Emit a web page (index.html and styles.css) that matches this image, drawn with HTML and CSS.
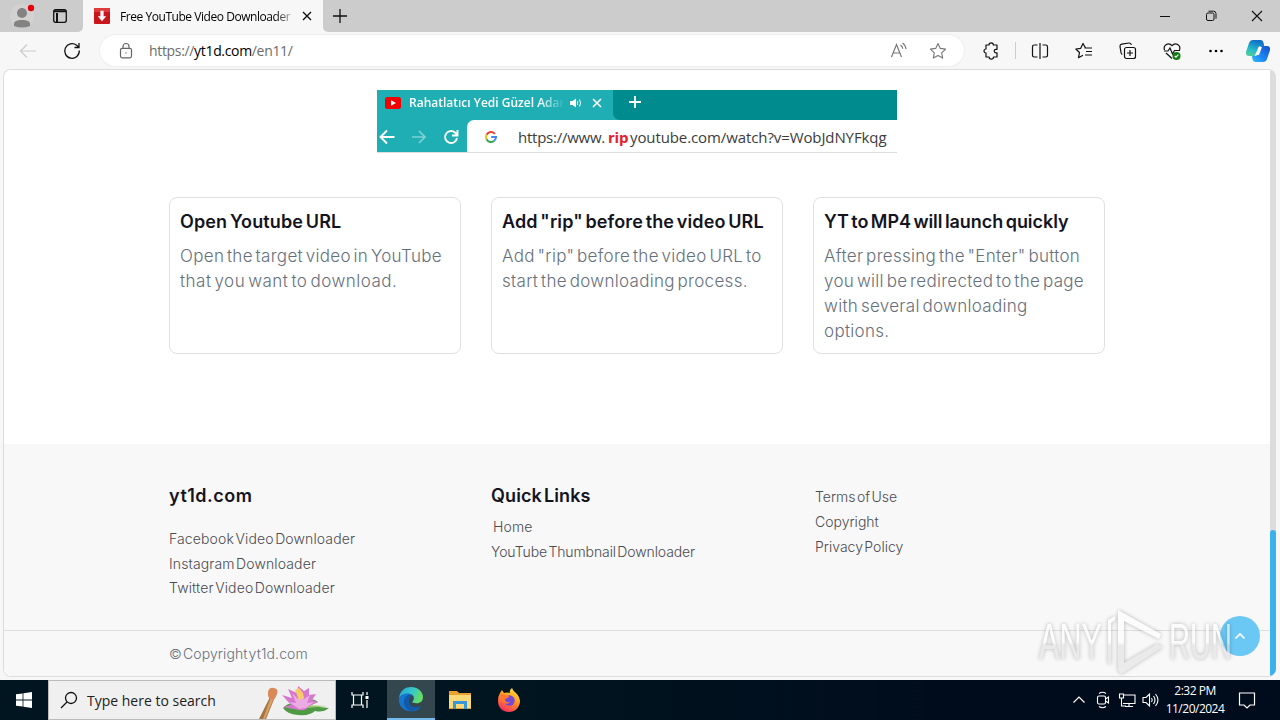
FILE: index.html
```html
<!DOCTYPE html>
<html lang="en">
<head>
    <meta charset="UTF-8">
    <meta name="viewport" content="width=device-width, initial-scale=1.0">
    <title>Free YouTube Video Downloader</title>
    <link rel="stylesheet" href="styles.css">
</head>
<body>
<div class="screen">
    <div class="tabbar">
        <div class="tab-left">
            <svg class="profile" width="26" height="28" viewBox="0 0 26 28"><circle cx="13" cy="14" r="12" fill="#d4d2d1"/><circle cx="13" cy="11" r="5" fill="#858382"/><path d="M5 24v-2c0-3 3-4 8-4s8 1 8 4v2q-8 3-16 0z" fill="#858382"/><circle cx="22" cy="6" r="3.2" fill="#e3000f"/></svg>
            <svg class="spaces" width="16" height="16" viewBox="0 0 16 16" fill="none" stroke="#111" stroke-width="1.3"><rect x="1.7" y="1.7" width="12.6" height="12.6" rx="2"/><path d="M2 3.2h12M5 5v9" stroke-width="2"/></svg>
        </div>
        <div class="tab">
            <svg width="16" height="16" viewBox="0 0 16 16"><rect width="16" height="16" rx="1" fill="#c9151b"/><path d="M0 0h16v4H0z" fill="#e03b3b"/><path d="M6.4 2.8h3.2v5.4h2.6L8 13.2 3.8 8.2h2.6z" fill="#fff"/></svg>
            <span class="tab-title">Free YouTube Video Downloader</span>
            <svg width="10" height="10" viewBox="0 0 10 10" stroke="#111" stroke-width="1.4"><path d="M1 1l8 8M9 1L1 9"/></svg>
        </div>
        <div class="tab-rest">
            <svg class="plus" width="14" height="14" viewBox="0 0 14 14" stroke="#111" stroke-width="1.3"><path d="M7 0v14M0 7h14"/></svg>
            <div class="win-btns">
                <svg width="12" height="12" viewBox="0 0 12 12" stroke="#111"><path d="M1 6.5h10"/></svg>
                <svg width="12" height="12" viewBox="0 0 12 12" stroke="#111" fill="none"><rect x="1.5" y="3" width="7.5" height="7.5" rx="1.5"/><path d="M3.5 1.2h5q2.5 0 2.5 2.5v5"/></svg>
                <svg width="12" height="12" viewBox="0 0 12 12" stroke="#111" stroke-width="1.1"><path d="M1 1l10 10M11 1L1 11"/></svg>
            </div>
        </div>
    </div>

    <div class="toolbar">
        <div class="nav">
            <svg width="20" height="20" viewBox="0 0 20 20" fill="none" stroke="#ccc" stroke-width="1.2"><path d="M18 10H3M9 3.5L2.5 10 9 16.5"/></svg>
            <svg width="20" height="20" viewBox="0 0 20 20" fill="none" stroke="#111" stroke-width="1.3"><path d="M17.3 9.5A7.3 7.3 0 1 1 14.6 4.3l2 1.7M17 2v4.5h-4.5"/></svg>
        </div>
        <div class="address">
            <svg width="16" height="18" viewBox="0 0 16 18" fill="none" stroke="#666" stroke-width="1.2"><rect x="2.5" y="6.3" width="11" height="9.5" rx="1.8"/><path d="M5 6V4.5a3 3 0 0 1 6 0V6"/><circle cx="8" cy="11" r=".7" fill="#666" stroke="none"/></svg>
            <span class="url">https://<b>yt1d.com</b>/en11/</span>
            <svg class="read" width="20" height="20" viewBox="0 0 20 20" fill="none" stroke="#777" stroke-width="1.2"><path d="M2.5 16L7.5 3.5 12.5 16M4.3 12h6.4M11.5 4q2 1.3 2.3 3.7M13.500 2q3 2 3.500 6"/></svg>
            <svg width="20" height="20" viewBox="0 0 20 20" fill="none" stroke="#777" stroke-width="1.1" stroke-linejoin="round"><path d="M10 2.5l2.3 4.9 5.3.7-3.9 3.7 1 5.3L10 14.5l-4.7 2.6 1-5.3-3.9-3.7 5.3-.7z"/></svg>
        </div>
        <div class="tools">
            <svg width="20" height="20" viewBox="0 0 20 20" fill="none" stroke="#111" stroke-width="1.2" stroke-linejoin="round"><path d="M5 4h3a2.200 2.200 0 0 1 4.400 0H16v4.300h-1a1.800 1.800 0 0 0 0 3.600h1V16h-3.500a2.200 2.200 0 0 1-4.400 0H5v-4a2 2 0 0 1 0-4z"/></svg>
            <i class="sep"></i>
            <svg width="20" height="20" viewBox="0 0 20 20" fill="none" stroke="#111" stroke-width="1.2"><path d="M10 2v16M7.500 4H4.200Q2.500 4 2.500 5.700v8.600Q2.500 16 4.200 16h3.300M12.500 4h3.300q1.700 0 1.700 1.700v8.600q0 1.700-1.700 1.700h-3.300"/></svg>
            <svg width="20" height="20" viewBox="0 0 20 20" fill="none" stroke="#111" stroke-width="1.2" stroke-linejoin="round"><path d="M11.500 7L9 2.500 6.700 7.300 1.800 8l3.700 3.500-1 5.200L9 14.200M10.500 7H18M12 10.500h6M11 14h7"/></svg>
            <svg width="20" height="20" viewBox="0 0 20 20" fill="none" stroke="#111" stroke-width="1.2"><rect x="6.5" y="6.5" width="11" height="11" rx="2"/><path d="M12 9v6M9 12h6M4.300 13.500q-1-.5-1.300-2L2 5.500q-.2-2 1.600-2.300L11 2q2-.2 2.400 2"/></svg>
            <svg width="20" height="20" viewBox="0 0 20 20" fill="none" stroke="#111" stroke-width="1.2"><path d="M2.500 9Q1.300 5.500 4 3.700q3.400-2 6 1 2.600-3 6-1 2.700 1.800 1.500 5.300M2 10h4l2-3 2.500 6 2-3.500H18M4 12l6 5.500"/><circle cx="14.5" cy="15" r="4" fill="#107c10" stroke="none"/><path d="M12.700 15l1.300 1.200 2.400-2.500" stroke="#fff"/></svg>
            <svg width="20" height="20" viewBox="0 0 20 20"><circle cx="4.5" cy="10" r="1.3"/><circle cx="10" cy="10" r="1.3"/><circle cx="15.5" cy="10" r="1.3"/></svg>
            <svg class="copilot" width="26" height="24" viewBox="0 0 26 24">
                <defs>
                    <linearGradient id="cpl" x1="0" y1="1" x2=".4" y2="0"><stop offset="0" stop-color="#5bd08b"/><stop offset=".45" stop-color="#25bccb"/><stop offset="1" stop-color="#1272c9"/></linearGradient>
                    <linearGradient id="cpr" x1="1" y1="0" x2="0" y2="1"><stop offset="0" stop-color="#1650c8"/><stop offset=".6" stop-color="#1e88f5"/><stop offset="1" stop-color="#35c1f4"/></linearGradient>
                </defs>
                <path d="M8 1h8q2 0 2.600 3l.6 3h-3.500q-2 0-2.700 2l-1.700 6q-.6 2-2.500 2H4q-3.500 0-3-4L4 4q1-3 4-3z" fill="url(#cpl)"/>
                <path d="M18 23h-8q-2 0-2.600-3L7 17h3q2 0 2.700-2l1.700-6q.6-2 2.500-2H22q3.500 0 3 4l-3 9q-1 3-4 3z" fill="url(#cpr)"/>
                <path d="M14 8h3l-3 8h-4z" fill="#fff"/>
            </svg>
        </div>
    </div>

    <div class="window">
        <main class="page">
            <section class="steps">
                <div class="banner">
                    <div class="banner-tabs">
                        <div class="banner-tab">
                            <svg width="16" height="12" viewBox="0 0 16 12"><rect width="16" height="12" rx="2.5" fill="#f00000"/><path d="M6 3.3v5.4L11 6z" fill="#fff"/></svg>
                            <span class="banner-title">Rahatlatıcı Yedi Güzel Adam</span>
                            <svg class="sound" width="12" height="10" viewBox="0 0 12 10" fill="none" stroke="#fff"><path d="M0 3h2.500L6 .5v9L2.500 7H0z" fill="#fff" stroke="none"/><path d="M7.500 3v4M9.500 1.500q2 3.500 0 7"/></svg>
                            <svg width="10" height="10" viewBox="0 0 10 10" stroke="#fff" stroke-width="1.6"><path d="M1 1l8 8M9 1L1 9"/></svg>
                        </div>
                        <div class="banner-new">
                            <svg width="12" height="12" viewBox="0 0 12 12" stroke="#fff" stroke-width="1.8"><path d="M6 0v12M0 6h12"/></svg>
                        </div>
                    </div>
                    <div class="banner-bar">
                        <div class="banner-nav">
                            <svg width="16" height="16" viewBox="0 0 16 16" fill="none" stroke="#fff" stroke-width="1.9"><path d="M15.500 8H2M8 1.500L1.500 8 8 14.500"/></svg>
                            <svg width="16" height="16" viewBox="0 0 16 16" fill="none" stroke="#80d0d4" stroke-width="1.7"><path d="M1 8h13M8 2l6 6-6 6"/></svg>
                            <svg width="16" height="16" viewBox="0 0 16 16" fill="none" stroke="#fff" stroke-width="1.9"><path d="M14 9a6 6 0 1 1-2-5.500l2 2M14.500 1v5.500H9"/></svg>
                        </div>
                        <div class="banner-url">
                            <svg width="12" height="12" viewBox="0 0 12 12" fill="none" stroke-width="2"><path d="M9.900 2.800A5 5 0 0 0 1.600 3.700" stroke="#ea4335"/><path d="M1.600 3.700a5 5 0 0 0 0 4.600" stroke="#fbbc05"/><path d="M1.600 8.300A5 5 0 0 0 9.300 9.800" stroke="#34a853"/><path d="M9.300 9.800A5 5 0 0 0 11 6H6.200" stroke="#4285f4"/></svg>
                            <span class="part-a">https://www.</span><span class="part-rip">rip</span><span class="part-b">youtube.com/watch?v=WobJdNYFkqg</span>
                        </div>
                    </div>
                </div>
                <div class="cards">
                    <div class="card">
                        <h3>Open Youtube URL</h3>
                        <p>Open the target video in YouTube<br><span class="wide">that you want to download.</span></p>
                    </div>
                    <div class="card">
                        <h3>Add "rip" before the video URL</h3>
                        <p>Add "rip" before the video URL to<br>start the downloading process.</p>
                    </div>
                    <div class="card">
                        <h3 class="tight">YT to MP4 will launch quickly</h3>
                        <p>After pressing the "Enter" button<br>you will be redirected to the page<br>with several downloading<br>options.</p>
                    </div>
                </div>
            </section>
            <footer class="footer">
                <div class="footer-cols">
                    <div class="col about">
                        <h4>yt1d.com</h4>
                        <a>Facebook Video Downloader</a>
                        <a>Instagram Downloader</a>
                        <a>Twitter Video Downloader</a>
                    </div>
                    <div class="col quick">
                        <h4>Quick Links</h4>
                        <a class="home">Home</a>
                        <a class="thumbs">YouTube Thumbnail Downloader</a>
                    </div>
                    <div class="col legal">
                        <a>Terms of Use</a>
                        <a>Copyright</a>
                        <a>Privacy Policy</a>
                    </div>
                </div>
                <div class="copyright">© Copyright yt1d.com</div>
            </footer>
        </main>
        <div class="scrollbar"><div class="thumb"></div></div>
    </div>

    <div class="taskbar">
        <div class="start"><svg width="16" height="16" viewBox="0 0 16 16" fill="#fff"><path d="M0 2.300L6.600 1.400v6.200H0zM7.400 1.300L16 0v7.600H7.400zM0 8.400h6.600v6.200L0 13.700zM7.400 8.400H16V16l-8.600-1.200z"/></svg></div>
        <div class="search">
            <svg width="18" height="18" viewBox="0 0 18 18" fill="none" stroke="#111" stroke-width="1.3"><circle cx="11" cy="7" r="5.5"/><path d="M7 11l-6 6"/></svg>
            <span>Type here to search</span>
            <svg class="lotus" width="76" height="38" viewBox="0 0 76 38">
                <path d="M14 14l4 2L9 38H2z" fill="#a8743e"/><path d="M15 13l3 1.500L8 38H6z" fill="#d2a26a"/><path d="M11 11q1-5 6-4 5 1 3 6-2 6-5 6-5-2-4-8z" fill="#d98a58"/>
                <path d="M26 27q8-8 26-8 4-2 9 2l-9 4 20 2q-6 5-14 3-5 5-17 4-11-1-15-7z" fill="#4f9b45"/><path d="M44 24l26 1-19 2z" fill="#97c96a"/>
                <path d="M42 29l-16-3 8-2-9-10 10 3-4-9 9 4 1-7 6 5 5-3 0 7 7-1-4 6 6 2-9 4q-2 5-10 4z" fill="#d777ce"/><path d="M42 28l-10-7 7 1-4-10 6 6 2-9 4 9 6-4-3 8 7-1-8 6z" fill="#edabe3"/><path d="M38 9l4-2 4 5 1 5-5 2z" fill="#f5cd62"/>
            </svg>
        </div>
        <div class="apps">
            <div class="app views"><svg width="18" height="18" viewBox="0 0 18 18" fill="none" stroke="#fff" stroke-width="1.2"><path d="M1 1v3h11V1M1 17v-3h11v3M2.500 4v10M10.500 4v10M16 1v3M16 9v8"/><path d="M16 5v3" stroke-width="3"/></svg></div>
            <div class="app active">
                <svg width="26" height="26" viewBox="0 0 26 26">
                    <defs><linearGradient id="edg" x1="0" y1="0" x2="1" y2=".3"><stop offset="0" stop-color="#22a4dc"/><stop offset=".6" stop-color="#37c8c8"/><stop offset="1" stop-color="#65dc67"/></linearGradient></defs>
                    <path d="M1 12C2 4 8 1 13 1c8 0 12 6 12 10 0 5-4 7-8 6-3 0-3-1-2-2 3-5-2-8-6-7-4 0-7 2-8 4z" fill="url(#edg)"/>
                    <path d="M1 12c2-4 9-6 13-3-5 0-7 4-6 8 2 6 9 7 15 3-3 5-8 6-12 5C4 24 0 18 1 12z" fill="#1377cf"/>
                    <path d="M14 9q-6-1-8 5c-1 5 2 10 7 11 4 0 8-2 10-5-7 3-12 0-12-5 0-3 2-5 3-6z" fill="#1359a9"/>
                </svg>
            </div>
            <div class="app"><svg width="22" height="20" viewBox="0 0 22 20"><path d="M0 1h8l2 2h12v16H0z" fill="#e9a22d"/><path d="M0 5h22v13H0z" fill="#fbd977"/><path d="M4 11h14v8h-3v-5H7v5H4z" fill="#3797d8"/></svg></div>
            <div class="app"><svg width="24" height="24" viewBox="0 0 24 24">
                <defs><linearGradient id="fox" x1=".8" y1="0" x2=".3" y2="1"><stop offset="0" stop-color="#ffe63b"/><stop offset=".45" stop-color="#ff9a21"/><stop offset="1" stop-color="#f52b62"/></linearGradient></defs>
                <path d="M3 5l2-3 2 3q3-1 6 0-1-3 2-5 1 3 4 5 4 4 4 9c-1 6-5 10-11 10S1 20 1 13q0-5 2-8z" fill="url(#fox)"/><circle cx="12.5" cy="12.5" r="5.2" fill="#7548d5"/><path d="M3 7q3-2 5 0l4 1q0 2-4 3 0 4 5 3-2 3-6 1-4-3-4-8z" fill="#ff7a30"/></svg></div>
        </div>
        <div class="tray">
            <svg width="14" height="14" viewBox="0 0 14 14" fill="none" stroke="#fff" stroke-width="1.2"><path d="M1.500 9.500L7 4l5.500 5.500"/></svg>
            <svg width="14" height="18" viewBox="0 0 14 18" fill="none" stroke="#fff" stroke-width="1.1"><rect x="1.5" y="5" width="8" height="8" rx="1.5"/><path d="M9.500 8l3-2v6l-3-2M3 2.500q3.500-2.500 7 0M3 15.500q3.500 2.500 7 0"/></svg>
            <svg width="18" height="16" viewBox="0 0 18 16" fill="none" stroke="#fff" stroke-width="1.1"><path d="M6 3h11v8.500H5M1.500 2h4v4h-4zM3.500 6v8H8M11 11.500V14M7 14.500h8"/></svg>
            <svg width="18" height="16" viewBox="0 0 18 16" fill="none" stroke="#fff" stroke-width="1.1"><path d="M1 5.500h3L7.500 2v12L4 10.500H1zM9.500 6q1.500 2 0 4M11.500 4q3 4 0 8M13.500 2q5 6 0 12"/></svg>
            <div class="clock"><span>2:32 PM</span><span>11/20/2024</span></div>
            <svg width="18" height="18" viewBox="0 0 18 18" fill="none" stroke="#fff" stroke-width="1.2"><path d="M1.500 2h15v12H12l-3 3-3-3H1.500z"/></svg>
        </div>
    </div>

    <div class="to-top"><svg width="12" height="8" viewBox="0 0 12 8" fill="none" stroke="#fff" stroke-width="1.6"><path d="M1.500 6.500L6 2l4.500 4.500"/></svg></div>
    <svg class="watermark" width="220" height="72" viewBox="0 0 220 72">
        <defs><linearGradient id="wm" x1="0" y1="0" x2="0" y2="1"><stop offset="0" stop-color="#fff"/><stop offset=".5" stop-color="#fff"/><stop offset=".56" stop-color="#e2e2e2"/><stop offset="1" stop-color="#e6e6e6"/></linearGradient></defs>
        <text x="4" y="52" textLength="63" lengthAdjust="spacingAndGlyphs">ANY</text>
        <text x="134" y="52" textLength="63" lengthAdjust="spacingAndGlyphs">RUN</text>
        <path class="mark" d="M73 13l7-4v4l-4 3v42l-3-2zM83 3l43 24-2 5L89 14v42l33-19 6 3L86 67l-3-4z"/>
    </svg>
</div>
</body>
</html>
```
FILE: styles.css
```css
* {
    box-sizing: border-box;
}
body {
    margin: 0;
    overflow: hidden;
    font-family: "Open Sans", "Noto Sans", sans-serif;
}
svg {
    display: block;
    flex: none;
}
.screen {
    position: relative;
    width: 1280px;
    height: 720px;
    display: flex;
    flex-direction: column;
    background: #f7f7f7;
}

/* tabs */
.tabbar {
    display: flex;
    height: 32px;
}
.tab-left {
    width: 83px;
    display: flex;
    align-items: center;
    padding-left: 9px;
    background: #ccc;
    border-radius: 0 0 5px 0;
}
.spaces {
    margin-left: 17px;
}
.tab {
    width: 240px;
    display: flex;
    align-items: center;
    padding-left: 11px;
    font-size: 12px;
}
.tab-title {
    width: 173px;
    margin: 0 9px 0 10px;
    white-space: nowrap;
    overflow: hidden;
    letter-spacing: -0.45px;
    -webkit-mask-image: linear-gradient(90deg, #000 155px, rgba(0, 0, 0, 0.2) 173px);
}
.tab-rest {
    flex: 1;
    display: flex;
    align-items: center;
    justify-content: space-between;
    padding-left: 10px;
    background: #ccc;
    border-radius: 0 0 0 5px;
}
.win-btns {
    display: flex;
    gap: 34px;
    padding-right: 17px;
}

/* toolbar */
.toolbar {
    display: flex;
    align-items: center;
    height: 37px;
}
.nav {
    display: flex;
    gap: 24px;
    width: 100px;
    padding-left: 18px;
}
.address {
    width: 864px;
    height: 31px;
    display: flex;
    align-items: center;
    padding: 0 16px 0 18px;
    background: #fff;
    border-radius: 16px;
    box-shadow: 0 0 2px #ddd;
}
.url {
    margin-left: 15px;
    font-size: 14px;
    letter-spacing: -0.33px;
    color: #6c6c6c;
}
.url b {
    font-weight: 400;
    color: #000;
}
.read {
    margin-left: auto;
    margin-right: 19px;
}
.tools {
    display: flex;
    align-items: center;
    gap: 24px;
    padding-left: 17px;
}
.sep {
    width: 1px;
    height: 17px;
    margin: 0 -10px;
    background: #ccc;
}
.copilot {
    margin-left: -5px;
}

/* page */
.window {
    display: flex;
    height: 608px;
    width: 1273px;
    margin-left: 3px;
    border: 1px solid #ddd;
    border-right: 0;
    border-radius: 8px;
    overflow: hidden;
}
.page {
    flex: 1;
    display: flex;
    flex-direction: column;
    background: #fff;
    font-family: Inter, sans-serif;
}
.steps {
    height: 374px;
    padding: 20px 0 0 165px;
}
.banner {
    width: 520px;
    height: 63px;
    margin-left: 208px;
    border-bottom: 1px solid #ddd;
    background: #1eaeb4;
    font-family: "Open Sans", sans-serif;
}
.banner-tabs {
    display: flex;
    height: 30px;
    background: #008b8f;
}
.banner-tab {
    width: 236px;
    display: flex;
    align-items: center;
    padding: 0 0 5px 8px;
    background: #1eaeb4;
    color: #fff;
}
.banner-title {
    width: 154px;
    margin: 0 7px 0 8px;
    font-size: 12px;
    font-weight: 600;
    line-height: 20px;
    white-space: nowrap;
    overflow: hidden;
    -webkit-mask-image: linear-gradient(90deg, #000 130px, transparent 156px);
}
.sound {
    margin-right: 10px;
}
.banner-new {
    flex: 1;
    padding: 6px 0 0 16px;
    border-bottom-left-radius: 7px;
    box-shadow: -5px 5px 0 #1eaeb4;
    background: #008b8f;
}
.banner-bar {
    display: flex;
    height: 32px;
}
.banner-nav {
    width: 90px;
    display: flex;
    gap: 16px;
    padding: 9px 0 0 2px;
}
.banner-url {
    position: relative;
    flex: 1;
    display: flex;
    align-items: center;
    padding: 2px 0 0 18px;
    background: #fff;
    border-top-left-radius: 7px;
    font-size: 15px;
    line-height: 20px;
    color: #3c3c3c;
    white-space: nowrap;
}
.part-a {
    width: 90px;
    margin-left: 21px;
    letter-spacing: -0.25px;
}
.part-rip {
    width: 22px;
    color: #e3202b;
    font-weight: 700;
    letter-spacing: -0.2px;
}
.part-b {
    letter-spacing: -0.1px;
}
.cards {
    display: flex;
    gap: 30px;
    margin-top: 44px;
}
.card {
    width: 292px;
    height: 157px;
    padding: 11px 0 0 10px;
    border: 1px solid #dee0e3;
    border-radius: 8px;
    white-space: nowrap;
}
.card h3 {
    margin: 0 0 10px;
    font-size: 18px;
    line-height: 25px;
    font-weight: 600;
    letter-spacing: 0.13px;
    word-spacing: -2px;
    color: #14141f;
}
.card .tight {
    letter-spacing: -0.05px;
}
.card p {
    margin: 0;
    font-size: 17px;
    line-height: 25px;
    font-weight: 300;
    letter-spacing: 0.3px;
    word-spacing: -2.3px;
    color: #66707d;
}
.card .wide {
    letter-spacing: 0.5px;
}

/* footer */
.footer {
    flex: 1;
    background: #f8f8f8;
}
.footer-cols {
    display: flex;
    height: 187px;
    padding: 39px 0 0 165px;
    border-bottom: 1px solid #dedede;
}
.col {
    width: 322px;
    display: flex;
    flex-direction: column;
    font-size: 14px;
    line-height: 24.7px;
    font-weight: 300;
    letter-spacing: 0.12px;
    word-spacing: -2.5px;
    color: #4b4b52;
}
.col h4 {
    margin: 0 0 6px;
    font-size: 18px;
    line-height: 26px;
    font-weight: 600;
    letter-spacing: 0.1px;
    color: #14141f;
}
.about h4 {
    margin-bottom: 18px;
    letter-spacing: 0.5px;
}
.home {
    padding-left: 2px;
}
.thumbs {
    letter-spacing: -0.1px;
}
.legal {
    padding: 1px 0 0 2px;
    line-height: 25px;
    letter-spacing: 0;
}
.copyright {
    padding: 10px 0 0 165px;
    font-size: 14px;
    line-height: 26px;
    font-weight: 300;
    letter-spacing: 0.1px;
    word-spacing: -3px;
    color: #66707d;
}
.scrollbar {
    width: 6px;
    padding-top: 460px;
    background: #dcdcdc;
}
.thumb {
    height: 146px;
    border-radius: 4px 4px 6px 0;
    background: #3db0ee;
}

/* floating button and mark */
.to-top {
    position: absolute;
    left: 1220px;
    top: 616px;
    width: 40px;
    height: 40px;
    display: flex;
    align-items: center;
    justify-content: center;
    border-radius: 50%;
    background: #6bc8f5;
}
.watermark {
    position: absolute;
    left: 1035px;
    top: 607px;
    filter: drop-shadow(0 0 2px rgba(0, 0, 0, 0.4));
    opacity: 0.65;
}
.watermark text {
    font-family: "Liberation Sans", sans-serif;
    font-size: 50px;
    fill: url(#wm);
}
.mark {
    fill: url(#wm);
}

/* taskbar */
.taskbar {
    display: flex;
    height: 40px;
    margin-top: 3px;
    background: linear-gradient(90deg, #00151f 0, #00151f 500px, #000b1c 1000px);
    color: #fff;
}
.start {
    width: 48px;
    padding: 12px 16px;
}
.search {
    width: 288px;
    display: flex;
    align-items: center;
    padding-left: 11px;
    border: 1px solid #bbb;
    background: #f0f0f0;
    color: #222;
    font-size: 14px;
}
.search span {
    flex: 1;
    margin-left: 9px;
    white-space: nowrap;
}
.search .lotus {
    margin-right: 2px;
}
.apps {
    display: flex;
    gap: 1px;
}
.app {
    width: 48px;
    display: flex;
    align-items: center;
    justify-content: center;
}
.views {
    margin-right: 2px;
}
.active {
    background: #34464e;
    border-bottom: 2px solid #76b9ed;
}
.tray {
    margin-left: auto;
    display: flex;
    align-items: center;
    padding-right: 21px;
}
.tray svg {
    width: 24px;
}
.clock {
    width: 60px;
    margin: 0 10px 0 2px;
    display: flex;
    flex-direction: column;
    align-items: center;
    font-size: 12px;
    line-height: 18px;
    letter-spacing: -0.5px;
}
```
